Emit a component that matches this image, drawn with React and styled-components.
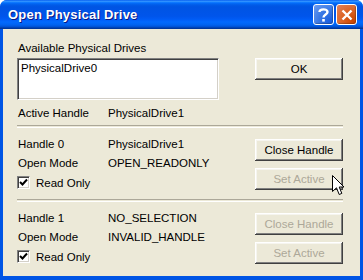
import styled, { createGlobalStyle } from 'styled-components'

const GlobalStyle = createGlobalStyle`
  html, body {
    margin: 0;
    padding: 0;
    background: #ffffff;
  }
  body {
    font-family: "Liberation Sans", Arial, sans-serif;
    font-size: 11.5px;
    color: #000;
  }
`

const Window = styled.div`
  position: relative;
  width: 363px;
  height: 280px;
  display: flex;
  flex-direction: column;
  border-radius: 7px 7px 0 0;
  overflow: hidden;
  background: #0055e5;
`

const TitleBar = styled.div`
  height: 29px;
  flex: none;
  display: flex;
  align-items: center;
  padding: 0 6px 0 8px;
  background: linear-gradient(
    to bottom,
    #0058ee 0%,
    #3593ff 4%,
    #288eff 6%,
    #127dff 8%,
    #036ffc 10%,
    #0262ee 14%,
    #0057e5 20%,
    #0054e3 24%,
    #0055eb 56%,
    #005bf5 66%,
    #026afe 76%,
    #0062ef 86%,
    #0052d6 92%,
    #0040ab 96%,
    #003092 100%
  );
`

const Title = styled.div`
  flex: 1;
  color: #fff;
  font-weight: bold;
  font-size: 13px;
  letter-spacing: 0.2px;
  text-shadow: 1px 1px #0a1883;
`

const Caption = styled.div`
  width: 21px;
  height: 21px;
  margin-left: 2px;
  box-sizing: border-box;
  border: 1px solid #fff;
  border-radius: 3px;
  display: flex;
  align-items: center;
  justify-content: center;
  background: ${p => p.$close
    ? 'radial-gradient(circle at 85% 85%, #cc4600 0%, #dc6527 50%, #e3825c 100%)'
    : 'radial-gradient(circle at 85% 85%, #1a5fe0 0%, #3a78e4 50%, #6f9ef2 100%)'};
  box-shadow: inset -1px -1px 1px rgba(0, 0, 0, 0.25);
`

const Client = styled.div`
  flex: 1;
  margin: 0 3px 4px 3px;
  background: #ece9d8;
  padding: 0 17px 0 14px;
  display: flex;
  flex-direction: column;
`

const Text = styled.div`
  height: ${p => p.$h || 19}px;
  line-height: ${p => p.$h || 19}px;
  padding-left: 1px;
  white-space: nowrap;
`

const TopRow = styled.div`
  display: flex;
  justify-content: space-between;
  align-items: flex-start;
  margin-top: 3px;
`

const ListBox = styled.div`
  width: 202px;
  height: 42px;
  box-sizing: border-box;
  background: #fff;
  border-top: 1px solid #808080;
  border-left: 1px solid #808080;
  border-right: 1px solid #fff;
  border-bottom: 1px solid #fff;
  box-shadow: inset 1px 1px #404040, inset -1px -1px #d4d0c8;
  padding: 2px 3px;
  line-height: 14px;
`

const Button = styled.div`
  width: 88px;
  height: 22px;
  box-sizing: border-box;
  display: flex;
  align-items: center;
  justify-content: center;
  background: #ece9d8;
  color: ${p => (p.$disabled ? '#aca899' : '#000')};
  box-shadow: inset -1px -1px #404040, inset 1px 1px #fff,
    inset -2px -2px #808080, inset 2px 2px #f6f5ef;
`

const InfoRow = styled.div`
  display: grid;
  grid-template-columns: 90px 1fr;
  height: 19px;
  line-height: 19px;
  padding-left: 1px;
  white-space: nowrap;
`

const Separator = styled.div`
  height: 1px;
  margin-top: ${p => p.$top || 0}px;
  border-top: 1px solid #aca899;
  border-bottom: 1px solid #fff;
`

const Section = styled.div`
  display: flex;
  justify-content: space-between;
  align-items: flex-start;
  height: 71px;
`

const Info = styled.div`
  padding-top: 7px;
`

const Buttons = styled.div`
  padding-top: 11px;
  display: flex;
  flex-direction: column;
  gap: 7px;
`

const CheckRow = styled.div`
  display: flex;
  align-items: center;
  height: 19px;
  gap: 6px;
`

const Box = styled.div`
  width: 13px;
  height: 13px;
  box-sizing: border-box;
  background: #fff;
  border-top: 1px solid #808080;
  border-left: 1px solid #808080;
  border-right: 1px solid #fff;
  border-bottom: 1px solid #fff;
  box-shadow: inset 1px 1px #404040, inset -1px -1px #d4d0c8;
  display: flex;
  align-items: center;
  justify-content: center;
`

const Cursor = styled.svg`
  position: absolute;
  left: 332px;
  top: 175px;
`

const CheckBox = ({ label }) => (
  <CheckRow>
    <Box>
      <svg width="9" height="9" viewBox="0 0 9 9">
        <path d="M1 4 L3.5 6.5 L8 1.5" stroke="#000" strokeWidth="2" fill="none" />
      </svg>
    </Box>
    <span>{label}</span>
  </CheckRow>
)

const HandleSection = ({ name, value, mode, setDisabled, closeDisabled }) => (
  <Section>
    <Info>
      <InfoRow>
        <span>{name}</span>
        <span>{value}</span>
      </InfoRow>
      <InfoRow>
        <span>Open Mode</span>
        <span>{mode}</span>
      </InfoRow>
      <CheckBox label="Read Only" />
    </Info>
    <Buttons>
      <Button $disabled={closeDisabled}>Close Handle</Button>
      <Button $disabled={setDisabled}>Set Active</Button>
    </Buttons>
  </Section>
)

export default function App() {
  return (
    <>
      <GlobalStyle />
      <Window>
        <TitleBar>
          <Title>Open Physical Drive</Title>
          <Caption>
            <svg width="11" height="14" viewBox="0 0 11 14">
              <path d="M1.5 4 C1.5 0.5 9.5 0.5 9.5 4 C9.5 6.5 5.5 6.5 5.5 9.5" stroke="#fff" strokeWidth="2.4" fill="none" />
              <rect x="4.2" y="11" width="2.6" height="2.6" fill="#fff" />
            </svg>
          </Caption>
          <Caption $close>
            <svg width="12" height="12" viewBox="0 0 12 12">
              <path d="M1.5 1.5 L10.5 10.5 M10.5 1.5 L1.5 10.5" stroke="#fff" strokeWidth="2.4" />
            </svg>
          </Caption>
        </TitleBar>
        <Client>
          <Text $h={14} style={{ marginTop: 12 }}>Available Physical Drives</Text>
          <TopRow>
            <ListBox>PhysicalDrive0</ListBox>
            <Button>OK</Button>
          </TopRow>
          <InfoRow style={{ marginTop: 4 }}>
            <span>Active Handle</span>
            <span>PhysicalDrive1</span>
          </InfoRow>
          <Separator $top={2} />
          <HandleSection
            name="Handle 0"
            value="PhysicalDrive1"
            mode="OPEN_READONLY"
            setDisabled
          />
          <Separator />
          <HandleSection
            name="Handle 1"
            value="NO_SELECTION"
            mode="INVALID_HANDLE"
            setDisabled
            closeDisabled
          />
        </Client>
        <Cursor width="13" height="21" viewBox="0 0 13 21">
          <path
            d="M0.5 0.5 L0.5 16.5 L4.5 12.8 L7.2 19.5 L9.8 18.4 L7.2 12 L12 12 Z"
            fill="#fff"
            stroke="#000"
            strokeWidth="1"
          />
        </Cursor>
      </Window>
    </>
  )
}
